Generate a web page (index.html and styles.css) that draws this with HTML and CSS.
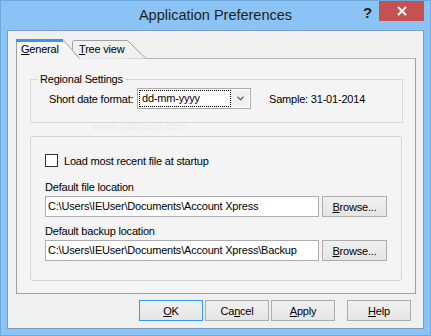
FILE: index.html
```html
<!DOCTYPE html>
<html lang="en">
<head>
    <meta charset="UTF-8">
    <title>Application Preferences</title>
    <link rel="stylesheet" href="styles.css">
</head>
<body>
    <div class="window">
        <div class="titlebar">
            <span class="title">Application Preferences</span>
            <span class="help-btn">?</span>
            <span class="close-btn">
                <svg width="10" height="10" viewBox="0 0 10 10"><path d="M1 1 L9 9 M9 1 L1 9" stroke="#fff" stroke-width="2"/></svg>
            </span>
        </div>
        <div class="client">
            <div class="tabs">
                <svg class="tab-shapes" width="140" height="20" viewBox="0 0 140 20">
                    <!-- inactive tab behind -->
                    <path d="M56.5 20 V3.5 Q56.5 1.5 58.5 1.5 H111.5 L130 19.5" fill="#F0F0F0" stroke="#A0A0A0"/>
                    <!-- active tab -->
                    <polygon points="0,0 47,0 64,19 64,20 0,20" fill="#F4F4F4"/>
                    <path d="M0.5 20 V0.5 M47 0.5 L63.5 19.5" fill="none" stroke="#A0A0A0"/>
                    <rect x="0" y="0" width="47" height="3" fill="#3D95E8"/>
                </svg>
                <span class="tab tab-active"><u>G</u>eneral</span>
                <span class="tab"><u>T</u>ree view</span>
            </div>
            <div class="page">
                <span class="mark">www.softpedia.com</span>
                <fieldset class="group">
                    <legend>Regional Settings</legend>
                    <div class="date-row">
                        <span class="date-label">Short date format:</span>
                        <div class="select">
                            <span class="select-value">dd-mm-yyyy</span>
                            <span class="select-arrow">
                                <svg width="7" height="5" viewBox="0 0 7 5"><path d="M0.5 0.8 L3.5 3.8 L6.5 0.8" fill="none" stroke="#6A6A6A" stroke-width="1.4"/></svg>
                            </span>
                        </div>
                        <span class="sample">Sample: 31-01-2014</span>
                    </div>
                </fieldset>
                <div class="panel">
                    <label class="check"><span class="box"></span>Load most recent file at startup</label>
                    <div class="field-label">Default file location</div>
                    <div class="field-row">
                        <div class="input">C:\Users\IEUser\Documents\Account Xpress</div>
                        <button class="btn btn-browse"><u>B</u>rowse...</button>
                    </div>
                    <div class="field-label second">Default backup location</div>
                    <div class="field-row">
                        <div class="input">C:\Users\IEUser\Documents\Account Xpress\Backup</div>
                        <button class="btn btn-browse"><u>B</u>rowse...</button>
                    </div>
                </div>
            </div>
            <div class="buttons">
                <button class="btn btn-ok"><u>O</u>K</button>
                <button class="btn">Ca<u>n</u>cel</button>
                <button class="btn"><u>A</u>pply</button>
                <button class="btn btn-help"><u>H</u>elp</button>
            </div>
        </div>
    </div>
</body>
</html>
```

FILE: styles.css
```css
body {
    margin: 0;
    font-family: "Liberation Sans", Arial, sans-serif;
    font-size: 11px;
    letter-spacing: -0.2px;
    color: #000;
    background: #fff;
}
.window {
    width: 431px;
    height: 336px;
    box-sizing: border-box;
    border: 1px solid #6FA8DC;
    background: #8BC3F4;
    display: flex;
    flex-direction: column;
}
/* Title bar */
.titlebar {
    height: 29px;
    position: relative;
    text-align: center;
}
.title {
    font-size: 14.5px;
    letter-spacing: 0;
    line-height: 29px;
    color: #1E1E1E;
}
.help-btn {
    position: absolute;
    left: 362px;
    top: 3px;
    font-size: 15px;
    font-weight: 700;
    letter-spacing: 0;
    color: #222;
}
.close-btn {
    position: absolute;
    left: 378px;
    top: 0;
    width: 45px;
    height: 20px;
    background: #C75050;
    display: flex;
    align-items: center;
    justify-content: center;
}
/* Client area */
.client {
    flex: 1;
    margin: 0 6px 6px;
    border: 1px solid #7C9EC3;
    background: #F0F0F0;
    display: flex;
    flex-direction: column;
}
.tabs {
    position: relative;
    z-index: 1;
    height: 19px;
    margin: 8px 0 0 8px;
    display: flex;
}
.tab-shapes {
    position: absolute;
    left: 0;
    top: 0;
}
.tab {
    position: relative;
    line-height: 13px;
    padding-top: 4px;
}
.tab-active {
    width: 51px;
    padding-left: 5px;
}
.tab + .tab {
    padding-left: 7px;
}
.page {
    position: relative;
    height: 236px;
    box-sizing: border-box;
    margin: 0 7px 0 8px;
    border: 1px solid #A0A0A0;
    border-top-color: #B4B4B4;
    background: #F4F4F4;
    display: flex;
    flex-direction: column;
}
.mark {
    position: absolute;
    left: 76px;
    top: 62px;
    pointer-events: none;
    font-size: 10px;
    font-weight: 700;
    letter-spacing: 0;
    color: rgba(0, 0, 0, 0.05);
}
/* Regional settings group */
.group {
    margin: 14px 12px 0 13px;
    padding: 0 0 13px 7px;
    border: 1px solid #D8D8D8;
    min-width: 0;
}
.group legend {
    padding: 0 2px;
    line-height: 13px;
}
.date-row {
    display: flex;
    align-items: center;
    margin-top: 2px;
    padding-left: 11px;
    height: 21px;
}
.date-label {
    width: 88px;
}
.select {
    width: 114px;
    height: 21px;
    box-sizing: border-box;
    border: 1px solid #ACACAC;
    background: #fff;
    display: flex;
    padding: 1px;
}
.select-value {
    flex: 1;
    border: 1px dotted #000;
    line-height: 15px;
    padding-left: 2px;
}
.select-arrow {
    width: 18px;
    background: #F0F0F0;
    display: flex;
    align-items: center;
    justify-content: center;
}
.sample {
    margin-left: 18px;
}
/* Files panel */
.panel {
    margin: 13px 13px 0 13px;
    padding: 17px 0 19px 14px;
    border: 1px solid #D5D5D5;
    border-radius: 3px;
}
.check {
    display: flex;
    align-items: center;
    height: 13px;
}
.box {
    width: 13px;
    height: 13px;
    box-sizing: border-box;
    border: 1px solid #333;
    background: #fff;
    margin-right: 6px;
}
.field-label {
    line-height: 13px;
    margin-top: 14px;
    margin-bottom: 2px;
}
.field-label.second {
    margin-top: 8px;
}
.field-row {
    display: flex;
    gap: 3px;
}
.input {
    width: 274px;
    height: 21px;
    box-sizing: border-box;
    border: 1px solid #ABADB3;
    background: #fff;
    line-height: 19px;
    padding-left: 2px;
    white-space: nowrap;
    overflow: hidden;
}
/* Buttons */
.btn {
    width: 64px;
    height: 21px;
    box-sizing: border-box;
    padding: 0;
    border: 1px solid #ACACAC;
    background: linear-gradient(#F0F0F0, #E5E5E5);
    font-family: "Liberation Sans", Arial, sans-serif;
    font-size: 11px;
    letter-spacing: -0.2px;
    color: #000;
}
.btn-browse {
    width: 65px;
}
.btn-ok {
    border-color: #3399FF;
}
.buttons {
    display: flex;
    justify-content: flex-end;
    gap: 2px;
    margin-top: 6px;
    padding-right: 12px;
}
.btn-help {
    margin-left: 10px;
}
```
